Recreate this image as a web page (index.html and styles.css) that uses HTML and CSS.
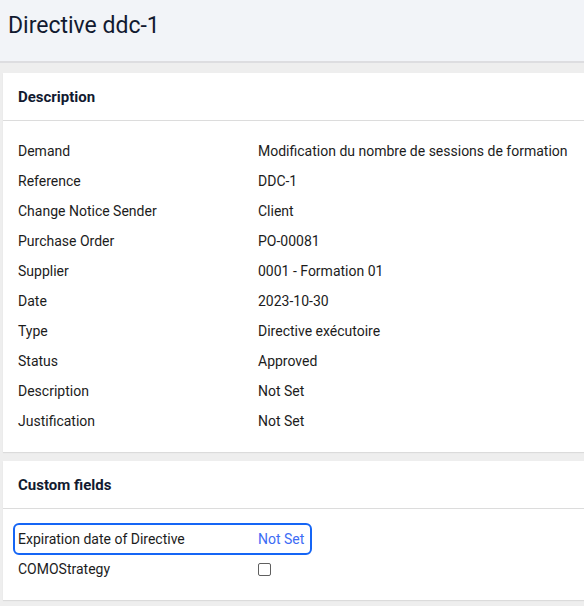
FILE: index.html
```html
<!DOCTYPE html>
<html>
<head>
<meta charset="utf-8">
<link rel="stylesheet" href="styles.css">
</head>
<body>
<header class="page-header">
  <h1 class="page-title">Directive ddc-1</h1>
</header>
<main class="content">
  <section class="card">
    <div class="card-header">Description</div>
    <div class="card-body">
      <div class="row"><span class="label">Demand</span><span class="value">Modification du nombre de sessions de formation</span></div>
      <div class="row"><span class="label">Reference</span><span class="value">DDC-1</span></div>
      <div class="row"><span class="label">Change Notice Sender</span><span class="value">Client</span></div>
      <div class="row"><span class="label">Purchase Order</span><span class="value">PO-00081</span></div>
      <div class="row"><span class="label">Supplier</span><span class="value">0001 - Formation 01</span></div>
      <div class="row"><span class="label">Date</span><span class="value">2023-10-30</span></div>
      <div class="row"><span class="label">Type</span><span class="value">Directive exécutoire</span></div>
      <div class="row"><span class="label">Status</span><span class="value">Approved</span></div>
      <div class="row"><span class="label">Description</span><span class="value">Not Set</span></div>
      <div class="row"><span class="label">Justification</span><span class="value">Not Set</span></div>
    </div>
  </section>
  <section class="card">
    <div class="card-header">Custom fields</div>
    <div class="card-body">
      <div class="row row-focus"><span class="label">Expiration date of Directive</span><span class="value link">Not Set</span></div>
      <div class="row"><span class="label">COMOStrategy</span><span class="value"><span class="checkbox"></span></span></div>
    </div>
  </section>
</main>
</body>
</html>
```
FILE: styles.css
```css
html, body {
  margin: 0;
  padding: 0;
}
body {
  background: #eeeeee;
  font-family: Roboto, "Liberation Sans", Arial, sans-serif;
  color: #1c1c1c;
  font-size: 14px;
  width: 584px;
  height: 606px;
  overflow: hidden;
}
.page-header {
  background: #f2f4f8;
  height: 61px;
  border-bottom: 2px solid #dddde0;
  display: flex;
  align-items: center;
  padding-left: 8px;
}
.page-title {
  margin: 0;
  font-size: 23px;
  font-weight: 400;
  color: #121a30;
  position: relative;
  top: -5px;
}
.content {
  padding: 10px 0 0 3px;
  display: flex;
  flex-direction: column;
  gap: 9px;
}
.card {
  background: #ffffff;
  box-shadow: 0 1px 1px rgba(0,0,0,0.08);
}
.card-header {
  height: 47px;
  border-bottom: 1px solid #dcdcdc;
  display: flex;
  align-items: center;
  padding-left: 15px;
  font-weight: 700;
  font-size: 15px;
  color: #121a30;
}
.card-body {
  padding: 15px 0 16px 15px;
  display: flex;
  flex-direction: column;
  align-items: flex-start;
}
.row {
  display: grid;
  grid-template-columns: 240px auto;
  height: 30px;
  align-items: center;
  line-height: 30px;
}
.row-focus {
  margin-left: -4px;
  padding: 0 7px 0 4px;
  outline: 2px solid #1565f5;
  outline-offset: -1px;
  border-radius: 5px;
}
.link {
  color: #3d6cf5;
}
.checkbox {
  display: inline-block;
  width: 11px;
  height: 11px;
  border: 1px solid #5f5f5f;
  border-radius: 2px;
  vertical-align: middle;
  position: relative;
  top: -1px;
}
```
